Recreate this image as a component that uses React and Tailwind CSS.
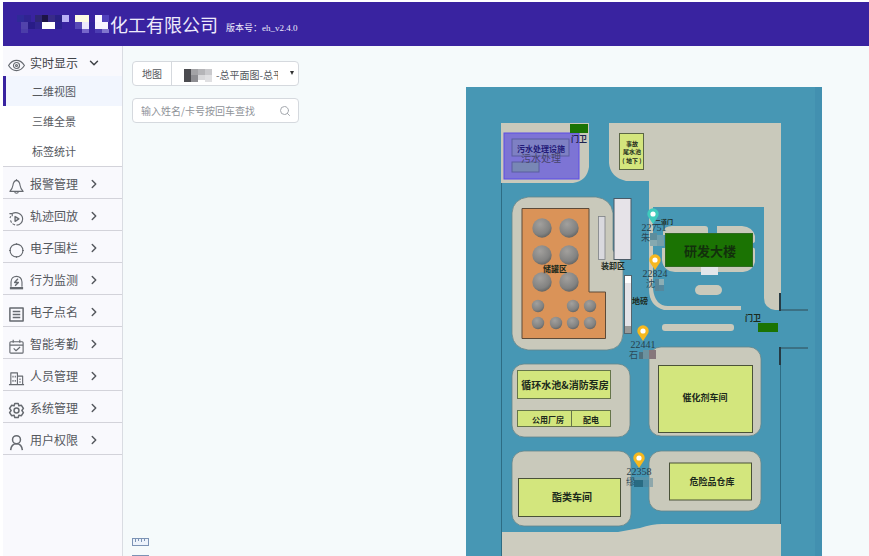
import React, { useState } from "react";
import { ChevronDown, ChevronRight, Search } from "lucide-react";

const menu = [
  { label: "报警管理", icon: "bell" },
  { label: "轨迹回放", icon: "replay" },
  { label: "电子围栏", icon: "fence" },
  { label: "行为监测", icon: "alarm" },
  { label: "电子点名", icon: "list" },
  { label: "智能考勤", icon: "calendar" },
  { label: "人员管理", icon: "building" },
  { label: "系统管理", icon: "gear" },
  { label: "用户权限", icon: "user" },
];

const subMenu = ["二维视图", "三维全景", "标签统计"];

const icons = {
  eye: (
    <>
      <path d="M.6 9C3 5.200 6 3.600 9 3.600S15 5.200 17.400 9C15 12.800 12 14.400 9 14.400S3 12.800.6 9Z" />
      <circle cx="9" cy="9" r="3.200" />
      <circle cx="9" cy="9" r="1" />
    </>
  ),
  bell: (
    <>
      <path d="M9 2.500C6.500 3 5.500 5 5.200 8C4.900 10.500 3.500 12.500 2 14.200H16C14.500 12.500 13.100 10.500 12.800 8C12.500 5 11.500 3 9 2.500Z" />
      <path d="M9 2.500V1.200M7 14.300C7.300 16.800 10.700 16.800 11 14.300" />
    </>
  ),
  replay: (
    <>
      <path d="M4.500 3.800C9 1.300 15.500 4 15.500 9.500C15.500 13 12.500 16 9 16" />
      <path d="M7.500 15.800C5 15.200 3.300 13.500 2.700 11" strokeDasharray="3 1.500" />
      <path d="M1.500 3.800H4.500V6.500M2 8.500L3 6.500" />
      <path d="M7.500 7V12L11.500 9.500Z" strokeWidth="1.5" />
    </>
  ),
  fence: (
    <>
      <circle cx="9" cy="9" r="6.800" />
      <path d="M9 1.200V3M9 15V16.800M1.200 9H3M15 9H16.800" />
    </>
  ),
  alarm: (
    <>
      <path d="M3.200 13.500V8.500C3.200 0.500 14.800 0.500 14.800 8.500V13.500" />
      <path d="M2 15H16" strokeWidth="2.5" />
      <path d="M10.500 5L7 9H11L7.500 12.500" strokeWidth="1.4" />
    </>
  ),
  list: (
    <>
      <rect x="2" y="2" width="14" height="14" />
      <path d="M5 5.800H13M5 9H13M5 12.200H13" />
    </>
  ),
  calendar: (
    <>
      <rect x="2" y="4" width="14" height="12" rx="1" />
      <path d="M2 7.500H16M5.500 1.800V5M12.500 1.800V5M6 11L8.500 13.500L12.800 9.500" />
    </>
  ),
  building: (
    <>
      <path d="M3 15.500V3H10V15.500M10 6.500H15.500V15.500M1 15.500H17" />
      <path d="M5.300 6V8M7.700 6V8M5.300 10.500V12.500M7.700 10.500V12.500M12.700 9V10.500M12.700 12V13.500" />
    </>
  ),
  gear: (
    <>
      <path d="M7.200 1.500H10.800L11.500 4L14.200 3.500L16.300 6.800L14.700 9L16.300 11.200L14.200 14.500L11.500 14L10.800 16.500H7.200L6.500 14L3.800 14.500L1.700 11.200L3.300 9L1.700 6.800L3.800 3.500L6.500 4Z" />
      <circle cx="9" cy="9" r="2.600" />
    </>
  ),
  user: (
    <>
      <circle cx="9" cy="6" r="4.200" />
      <path d="M2.800 17C3.200 13 5.500 10.300 9 10.300S14.800 13 15.200 17" />
    </>
  ),
};

const MenuIcon = ({ name }) => (
  <svg
    viewBox="0 0 18 18"
    className="w-[17px] h-[17px] mt-1 shrink-0 fill-none stroke-[#666a70]"
    strokeWidth={name === "gear" || name === "user" || name === "list" ? 1.6 : 1.2}
    strokeLinejoin="round"
  >
    {icons[name]}
  </svg>
);

// x, y, width, height, color
const titleBlocks = [
  [2, 0, 7, 7, "#2f2a98"],
  [9, 0, 7, 7, "#302391"],
  [20, 0, 7, 7, "#2f2675"],
  [27, 0, 6, 7, "#1d1447"],
  [33, 0, 7, 7, "#382b88"],
  [40, 0, 7, 7, "#2a2085"],
  [47, 0, 7, 7, "#b9b0f5"],
  [60, 0, 14, 7, "#fdfbe2"],
  [80, 0, 7, 7, "#fbf9ff"],
  [87, 0, 7, 7, "#5242bd"],
  [6, 7, 7, 7, "#5143ab"],
  [13, 7, 7, 7, "#291c87"],
  [20, 7, 7, 7, "#31258f"],
  [27, 7, 13, 7, "#ffffff"],
  [40, 7, 7, 7, "#2b2090"],
  [60, 7, 7, 7, "#5849b7"],
  [67, 7, 7, 7, "#ece7fb"],
  [74, 7, 6, 7, "#33259d"],
  [80, 7, 13, 7, "#f8f6ff"],
  [6, 14, 7, 4, "#4b3da9"],
  [67, 14, 7, 4, "#7666cb"],
  [80, 14, 7, 4, "#4c3db2"],
  [87, 14, 7, 4, "#8076ce"],
];

const mapNameBlocks = [
  [0, 0, 7, 13, "#4b4b4f"],
  [7, 0, 7, 6, "#a3a3a6"],
  [7, 6, 7, 7, "#8e8e92"],
  [14, 0, 7, 6, "#b5b5b8"],
  [14, 6, 7, 5, "#d8d8da"],
  [21, 0, 7, 6, "#c9c9cc"],
  [21, 6, 7, 7, "#e0e0e2"],
];

const Blocks = ({ items }) =>
  items.map(([x, y, w, h, fill]) => (
    <rect key={`${x}-${y}`} x={x} y={y} width={w} height={h} fill={fill} />
  ));

const bigTanks = [228, 255, 282].flatMap((y) => [[542, y], [569, y]]);
const smallTanks = [
  [538, 306],
  [573, 306],
  [590, 306],
  [538, 323],
  [556, 323],
  [573, 323],
  [590, 323],
];

const people = [
  {
    id: "22751", name: "朱", x: 653, y: 214, color: "#3fcbbd", labelX: 654, nameX: 641,
    blocks: [[650, 233, 7, 7, "#5d8d9c"], [657, 235, 7, 5, "#6d9fae"], [650, 240, 7, 6, "#85a9b0"], [657, 240, 7, 6, "#769eaa"]],
  },
  {
    id: "22824", name: "沈", x: 655, y: 260, color: "#f6b81f", labelX: 655, nameX: 646,
    blocks: [[655, 279, 4, 12, "#578597"], [659, 279, 5, 6, "#8baeb5"], [659, 285, 5, 6, "#56889d"]],
  },
  {
    id: "22441", name: "石", x: 643, y: 331, color: "#f6b81f", labelX: 643, nameX: 629,
    blocks: [[639, 352, 4, 7, "#50707d"], [643, 350, 6, 9, "#6c929f"], [649, 350, 7, 9, "#86777b"]],
  },
  {
    id: "22358", name: "缪", x: 639, y: 458, color: "#f6b81f", labelX: 639, nameX: 626,
    blocks: [[634, 480, 9, 7, "#286b83"], [643, 480, 6, 7, "#4c8ba3"], [634, 477, 15, 3, "#5795aa"], [649, 478, 4, 9, "#8ea7ab"]],
  },
];

const Label = ({ x, y, size = 8, color = "#1c2a1c", weight = 700, children }) => (
  <text
    x={x}
    y={y}
    fontSize={size}
    fontWeight={weight}
    fill={color}
    textAnchor="middle"
    dominantBaseline="central"
  >
    {children}
  </text>
);

const PlantMap = () => (
  <svg
    viewBox="466 87 356 469"
    className="w-[356px] h-[469px] shrink-0 font-['Noto_Sans_CJK_SC',sans-serif]"
    role="img"
    aria-label="总平面图"
  >
    <defs>
      <radialGradient id="tank" cx="0.4" cy="0.3" r="0.75">
        <stop offset="0" stopColor="#a2a09d" />
        <stop offset="0.7" stopColor="#828281" />
        <stop offset="1" stopColor="#5f605f" />
      </radialGradient>
    </defs>
    <rect x="466" y="87" width="356" height="469" fill="#4797b4" />
    <rect x="815" y="87" width="7" height="469" fill="#4290b0" />

    {/* land */}
    <g fill="#c9c9bb">
      <path d="M501 123H589V167Q587 181 573 183H501Z" />
      <path d="M609 123H781V310H775Q764 308 764 298V207H653V289Q655 306 668 306H741V310H664Q649 306 649 289V181H626Q610 177 609 163Z" />
      <path d="M501 532H618L640 528Q652 524 662 524H781V556H501Z" fill="#cdccbf" />
      <path d="M663 235V232Q664 226 672 226H705Q708 226 708 229V235Z" />
      <path d="M717 235V226H742Q753 227 755 236V241Q755 243 752 243V235Z" />
      <path d="M662 248H752Q755 247 755 250V262Q753 271 743 272H675Q663 271 662 260Z" />
      <rect x="695" y="285" width="27" height="10" rx="5" />
      <rect x="662" y="324" width="72" height="7" rx="3" />
    </g>
    <g fill="#c9c9bb" stroke="#65858a" strokeWidth="0.8">
      <path d="M528 197H596Q611 199 613 213V250L623 265V334Q622 349 607 350H528Q513 348 512 334V213Q513 199 528 197Z" />
      <rect x="512" y="364" width="118" height="73" rx="12" />
      <rect x="512" y="451" width="119" height="75" rx="12" />
      <rect x="649" y="347" width="112" height="89" rx="12" />
      <rect x="649" y="451" width="112" height="60" rx="12" />
    </g>
    <path d="M501.500 183V556M780.500 365V524" stroke="#2d6c84" fill="none" />
    <path d="M780 310H808M780 348H808" stroke="#304a55" fill="none" />
    <path d="M780 293V311M780 347V365" stroke="#263a43" strokeWidth="2" fill="none" />

    {/* sewage zone */}
    <rect x="504" y="133" width="75" height="46" fill="#7d74d5" stroke="#5d4ce6" />
    <rect x="512" y="139" width="57" height="17" fill="#7e80c3" stroke="#5b5c9f" />
    <rect x="512" y="162" width="27" height="10" fill="#7887b5" stroke="#5b5c9f" />
    <Label x={541} y={148} color="#231a78">污水处理设施</Label>
    <Label x={541} y={157} size={10} weight={400} color="#46446c">污水处理</Label>
    <rect x="570" y="124" width="18" height="9" fill="#1b7303" />
    <Label x={579} y={138} color="#1d2350">门卫</Label>

    <rect x="619.500" y="133.500" width="24" height="36" fill="#d4e67d" stroke="#5b6644" />
    <Label x={632} y={143} size={6}>事故</Label>
    <Label x={632} y={151} size={6}>尾水池</Label>
    <Label x={632} y={160} size={6}>( 地下 )</Label>

    {/* tank farm */}
    <path d="M522 208.500H589V292H605.500V338.500H522Z" fill="#da9358" stroke="#5c4a38" />
    {bigTanks.map(([x, y]) => (
      <circle key={`${x}-${y}`} cx={x} cy={y} r="9.700" fill="url(#tank)" />
    ))}
    {smallTanks.map(([x, y]) => (
      <circle key={`${x}-${y}`} cx={x} cy={y} r="6.200" fill="url(#tank)" />
    ))}
    <rect x="598.500" y="216.500" width="6.500" height="43" fill="#d9d9de" stroke="#7d8186" strokeWidth="0.800" />
    <rect x="614" y="198.500" width="17" height="61" fill="#e6e3e8" stroke="#4b5a66" />
    <rect x="624.500" y="275.500" width="7" height="58" fill="#e4e3e7" stroke="#53646d" />
    <rect x="625" y="276" width="6" height="7" fill="#fff" />
    <rect x="625" y="326" width="6" height="7" fill="#999a98" />
    <Label x={555} y={268}>储罐区</Label>
    <Label x={613} y={265}>装卸区</Label>
    <Label x={640} y={300}>地磅</Label>

    {/* office block */}
    <rect x="665.500" y="233.500" width="87" height="33" fill="#1b7303" stroke="#2f6a20" />
    <rect x="701" y="267" width="17" height="8" fill="#e3e6ea" />
    <Label x={710} y={250} size={13} color="#12300c">研发大楼</Label>
    <Label x={664} y={221} size={6}>二道门</Label>
    <rect x="758" y="323" width="20" height="9" fill="#1b7303" />
    <Label x={753} y={317}>门卫</Label>

    {/* workshops */}
    <g fill="#d3e67d" stroke="#66754a">
      <rect x="517.500" y="370.500" width="93" height="28" />
      <rect x="517.500" y="410.500" width="93" height="16" />
      <path d="M571.500 410V426" />
    </g>
    <g fill="#d3e67d" stroke="#4a5238">
      <rect x="518.500" y="478.500" width="102" height="38" />
      <rect x="658.500" y="365.500" width="94" height="67" />
      <rect x="669.500" y="463" width="82" height="37" />
    </g>
    <Label x={565} y={384} size={10}>循环水池&amp;消防泵房</Label>
    <Label x={548} y={419}>公用厂房</Label>
    <Label x={591} y={419}>配电</Label>
    <Label x={572} y={496} size={10}>酯类车间</Label>
    <Label x={705} y={397} size={9}>催化剂车间</Label>
    <Label x={712} y={481} size={9}>危险品仓库</Label>

    {people.map((p) => (
      <g key={p.id}>
        <path
          d={`M${p.x} ${p.y + 10}L${p.x - 4} ${p.y + 4}A5.700 5.700 0 1 1 ${p.x + 4} ${p.y + 4}Z`}
          fill={p.color}
        />
        <circle cx={p.x} cy={p.y} r="2.600" fill="#fff" />
        <Blocks items={p.blocks} />
        <text
          x={p.labelX}
          y={p.y + 17}
          fontSize="10"
          fill="#263d4a"
          textAnchor="middle"
          className="font-['Liberation_Serif',serif]"
        >
          {p.id}
        </text>
        <text x={p.nameX} y={p.y + 27} fontSize="9" fill="#2c4a58">
          {p.name}
        </text>
      </g>
    ))}
  </svg>
);

const Ruler = () => (
  <svg viewBox="0 0 17 8" className="w-[17px] h-2 shrink-0 fill-[#edf3fb] stroke-[#7c93b5]">
    <rect x="0.500" y="0.500" width="16" height="7" />
    <path d="M3.500 1V4M6.500 1V3M9.500 1V4M12.500 1V3" />
  </svg>
);

const App = () => {
  const [open, setOpen] = useState(true);
  const [active, setActive] = useState("二维视图");
  const [keyword, setKeyword] = useState("");

  return (
    <div className="flex flex-col h-screen overflow-hidden pt-[2px] pl-[3px] bg-white font-['Noto_Sans_CJK_SC',sans-serif] text-[#55585e]">
      <header className="flex items-center h-11 shrink-0 pl-3 bg-[#3923a0] text-[#eeebfb]">
        <svg viewBox="0 0 95 18" className="w-[95px] h-[18px] shrink-0" aria-hidden="true">
          <Blocks items={titleBlocks} />
        </svg>
        <h1 className="text-[18px] leading-6">化工有限公司</h1>
        <p className="ml-2 mt-2 text-[9px] leading-4 font-['Liberation_Serif','Noto_Sans_CJK_SC',serif]">
          版本号：eh_v2.4.0
        </p>
      </header>

      <div className="flex flex-1 min-h-0">
        {/* Sidebar */}
        <nav className="w-[120px] shrink-0 border-r border-[#d9dce2] bg-[#f9f9fd]">
          <div className="border-b border-[#d3d3da]">
            <button
              className="flex items-center w-full h-[30px] pt-1 pl-[5px] text-[12px] text-[#3f4247]"
              onClick={() => setOpen(!open)}
            >
              <MenuIcon name="eye" />
              <span className="ml-[5px]">实时显示</span>
              <ChevronDown size={14} strokeWidth={2.5} className="ml-[9px]" />
            </button>
            {open && (
              <ul className="bg-white">
                {subMenu.map((item) => (
                  <li key={item}>
                    <button
                      className={`flex items-center w-full h-[30px] border-l-[3px] pl-[26px] text-[11px] ${
                        active === item
                          ? "border-[#3923a0] bg-[#f2f6fe]"
                          : "border-transparent"
                      }`}
                      onClick={() => setActive(item)}
                    >
                      {item}
                    </button>
                  </li>
                ))}
              </ul>
            )}
          </div>
          {menu.map((item) => (
            <button
              key={item.label}
              className="flex items-center w-full h-8 pt-[3px] pl-[5px] border-b border-[#d3d3da] text-[12px]"
            >
              <MenuIcon name={item.icon} />
              <span className="ml-[5px]">{item.label}</span>
              <ChevronRight size={14} strokeWidth={2.5} className="ml-[9px]" />
            </button>
          ))}
        </nav>

        {/* Main Content */}
        <main className="flex flex-1 min-w-0 pr-[47px] bg-[#f5fafb]">
          <div className="flex flex-col flex-1 min-w-0 pl-[9px] pt-[15px]">
            <div className="relative flex items-center w-[167px] h-[25px] rounded border border-[#d5d9de] bg-white text-[10px]">
              <label htmlFor="map" className="px-[9px]">
                地图
              </label>
              <select
                id="map"
                className="flex-1 min-w-0 h-full appearance-none border-l border-[#d5d9de] bg-transparent pl-11 pr-5 pt-[2px] overflow-hidden"
              >
                <option>-总平面图-总平面图</option>
              </select>
              <svg
                viewBox="0 0 28 13"
                className="absolute left-[51px] top-[7px] w-7 h-[13px] pointer-events-none"
                aria-hidden="true"
              >
                <Blocks items={mapNameBlocks} />
              </svg>
              <svg
                viewBox="0 0 4 4"
                className="absolute right-1 top-[9px] w-1 h-1 fill-[#333] pointer-events-none"
                aria-hidden="true"
              >
                <path d="M0 0H4L2 4Z" />
              </svg>
            </div>
            <div className="relative w-[167px] mt-3">
              <input
                type="text"
                aria-label="输入姓名/卡号按回车查找"
                placeholder="输入姓名/卡号按回车查找"
                value={keyword}
                onChange={(e) => setKeyword(e.target.value)}
                className="block w-full h-[25px] rounded border border-[#d5d9de] bg-white pl-2 pr-6 text-[10px] placeholder:text-[#8f9399]"
              />
              <Search size={12} className="absolute right-2 top-[7px] text-[#a4a8ae]" />
            </div>
            <div className="flex flex-col gap-[9px] h-[18px] mt-auto overflow-hidden">
              <Ruler />
              <Ruler />
            </div>
          </div>
          <div className="shrink-0 pt-[41px]">
            <PlantMap />
          </div>
        </main>
      </div>
    </div>
  );
};

export default App;
